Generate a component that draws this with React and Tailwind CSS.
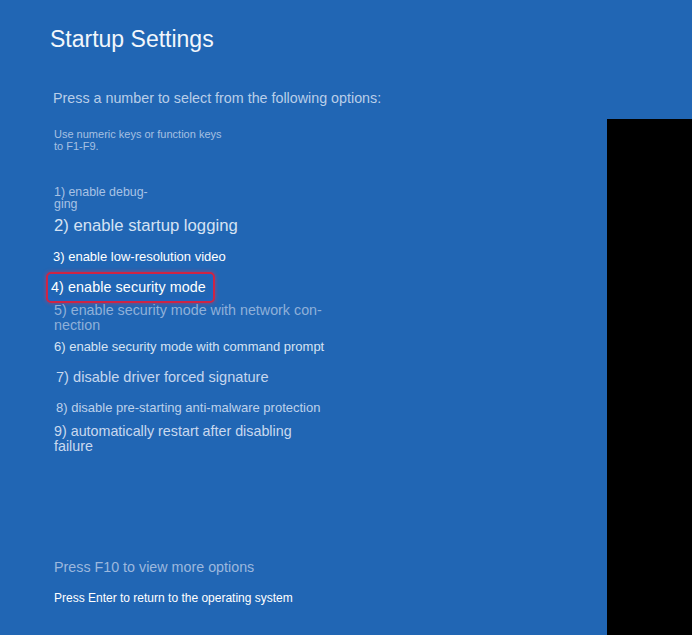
export default function App() {
  const font = { fontFamily: '"Liberation Sans", Arial, sans-serif' };
  return (
    <div className="flex w-[692px] h-[635px] bg-[#2166b4] overflow-hidden" style={font}>
      <div className="flex-1 flex flex-col pt-[28px] pl-[50px]">
        <div className="h-[62px] text-[23px] leading-[23px] text-[#f2f6fb]">Startup Settings</div>
        <div className="h-[38px] ml-[3px] text-[14.3px] leading-[16px] text-[#b9cee9]">
          Press a number to select from the following options:
        </div>
        <div className="h-[58px] ml-[4px] text-[11px] leading-[12px] text-[#a6c0e2]">
          <div>Use numeric keys or function keys</div>
          <div>to F1-F9.</div>
        </div>
        <div className="h-[30px] ml-[4px] text-[12.4px] leading-[12px] text-[#a8c2e4]">
          <div>1) enable debug-</div>
          <div>ging</div>
        </div>
        <div className="h-[33px] ml-[4px] text-[16.7px] leading-[20px] text-[#d5e2f3]">
          2) enable startup logging
        </div>
        <div className="h-[23px] ml-[3px] text-[13px] leading-[16px] text-white">
          3) enable low-resolution video
        </div>
        <div className="h-[31px] w-[169px] -ml-[4px] border-2 border-[#cf2444] rounded-[5px] pt-[5px] pl-[3px] text-[14.3px] leading-[16px] text-white tracking-[0.1px] shadow-[0_0_4px_rgba(235,50,80,0.6),inset_0_0_5px_rgba(30,100,215,0.8)]">
          4) enable security mode
        </div>
        <div className="h-[36px] ml-[4px] text-[14.3px] leading-[14.5px] text-[#8fb0d9]">
          <div>5) enable security mode with network con-</div>
          <div>nection</div>
        </div>
        <div className="h-[29px] ml-[4px] text-[13px] leading-[16px] text-[#d6e3f3]">
          6) enable security mode with command prompt
        </div>
        <div className="h-[32px] ml-[6px] text-[14.6px] leading-[18px] text-[#c6d7ee]">
          7) disable driver forced signature
        </div>
        <div className="h-[24px] ml-[6px] text-[13px] leading-[16px] text-[#bdd1eb]">
          8) disable pre-starting anti-malware protection
        </div>
        <div className="h-[135px] ml-[4px] text-[14.3px] leading-[14.5px] text-[#c9d9ef]">
          <div>9) automatically restart after disabling</div>
          <div>failure</div>
        </div>
        <div className="h-[32px] ml-[4px] text-[14.3px] leading-[16px] text-[#9cb8de]">
          Press F10 to view more options
        </div>
        <div className="ml-[4px] text-[12px] leading-[14px] text-white">
          Press Enter to return to the operating system
        </div>
      </div>
      <div className="w-[85px] flex flex-col">
        <div className="h-[119px]" />
        <div className="flex-1 bg-black" />
      </div>
    </div>
  );
}
